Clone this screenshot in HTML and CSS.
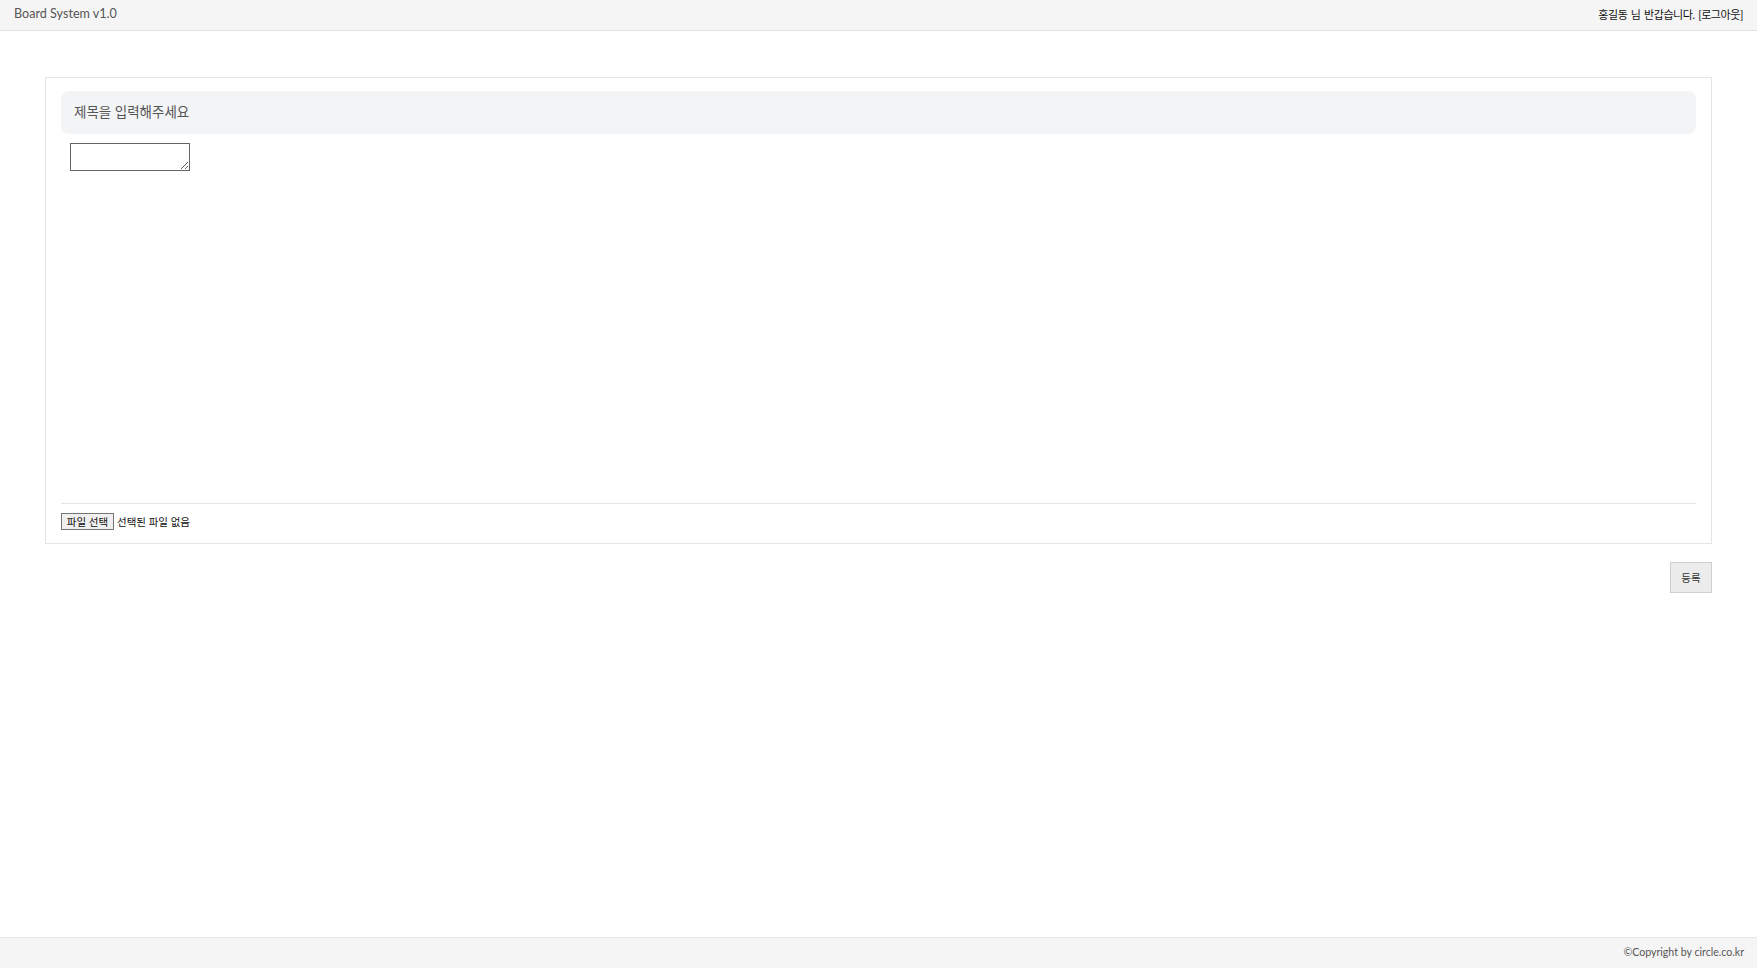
FILE: index.html
```html
<!DOCTYPE html>
<html lang="ko">
<head>
<meta charset="utf-8">
<title>Board System v1.0</title>
<link rel="stylesheet" href="styles.css">
</head>
<body>
<div class="header">
   <span class="brand">Board System v1.0</span>
   <span class="user">홍길동 님 반갑습니다. <a href="#" class="logout">[로그아웃]</a></span>
</div>

<div class="main">
   <form class="write-card" onsubmit="return false;">
      <div class="title-box">제목을 입력해주세요</div>
      <div class="editor">
         <textarea class="editor-area"></textarea>
      </div>
      <div class="file-row">
         <span class="file-btn">파일 선택</span>
         <span class="file-name">선택된 파일 없음</span>
      </div>
   </form>
   <div class="actions">
      <button type="button" class="btn-save">등록</button>
   </div>
</div>

<div class="footer"><span class="copy">©Copyright by circle.co.kr</span></div>
</body>
</html>
```

FILE: styles.css
```css
html, body {
   height: 100%;
}

body {
   margin: 0;
   display: flex;
   flex-direction: column;
   font-family: Lato, "Noto Sans CJK KR", sans-serif;
   background-color: white;
   color: #222;
}

.header {
   height: 30px;
   border-bottom: 1px solid #e2e2e2;
   background-color: #f5f5f5;
   padding: 0 14px;
   display: flex;
   justify-content: space-between;
   align-items: center;
}

.brand {
   font-size: 12.6px;
   color: #555;
   margin-top: -3px;
}

.user {
   font-size: 11px;
   letter-spacing: -0.4px;
   word-spacing: 1px;
   color: #111;
   margin-top: -3px;
}

.logout {
   color: #111;
   text-decoration: none;
}

.main {
   flex: 1;
   padding: 46px 45px 0;
}

.write-card {
   border: 1px solid #e5e5e5;
   padding: 13px 15px 12px;
}

.title-box {
   height: 43px;
   border-radius: 8px;
   background-color: #f3f4f6;
   padding: 0 0 4px 13px;
   box-sizing: border-box;
   display: flex;
   align-items: center;
   font-size: 13.5px;
   color: #555;
}

.editor {
   height: 360px;
   padding: 9px 0 0 9px;
   border-bottom: 1px solid #e5e5e5;
}

.editor-area {
   box-sizing: border-box;
   width: 120px;
   height: 28px;
   margin: 0;
   border: 1px solid #666;
   resize: both;
}

.file-row {
   padding: 9px 0 1px;
   display: flex;
   align-items: center;
   font-size: 10.5px;
   color: #111;
}

.file-btn {
   box-sizing: border-box;
   height: 17px;
   width: 53px;
   border: 1px solid #767676;
   background-color: #efefef;
   display: flex;
   align-items: center;
   justify-content: center;
   margin-right: 3px;
}

.actions {
   display: flex;
   justify-content: flex-end;
   margin-top: 18px;
}

.btn-save {
   width: 42px;
   height: 31px;
   border: 1px solid #cfcfcf;
   background-color: #ececec;
   font-family: "Noto Sans CJK KR", sans-serif;
   font-size: 10.5px;
   color: #333;
   padding: 0;
}

.footer {
   height: 30px;
   border-top: 1px solid #e6e6e6;
   background-color: #f5f5f5;
   padding: 0 13px;
   display: flex;
   justify-content: flex-end;
   align-items: center;
   font-size: 10.6px;
   color: #555;
}

.copy {
   margin-top: -3px;
}
```
